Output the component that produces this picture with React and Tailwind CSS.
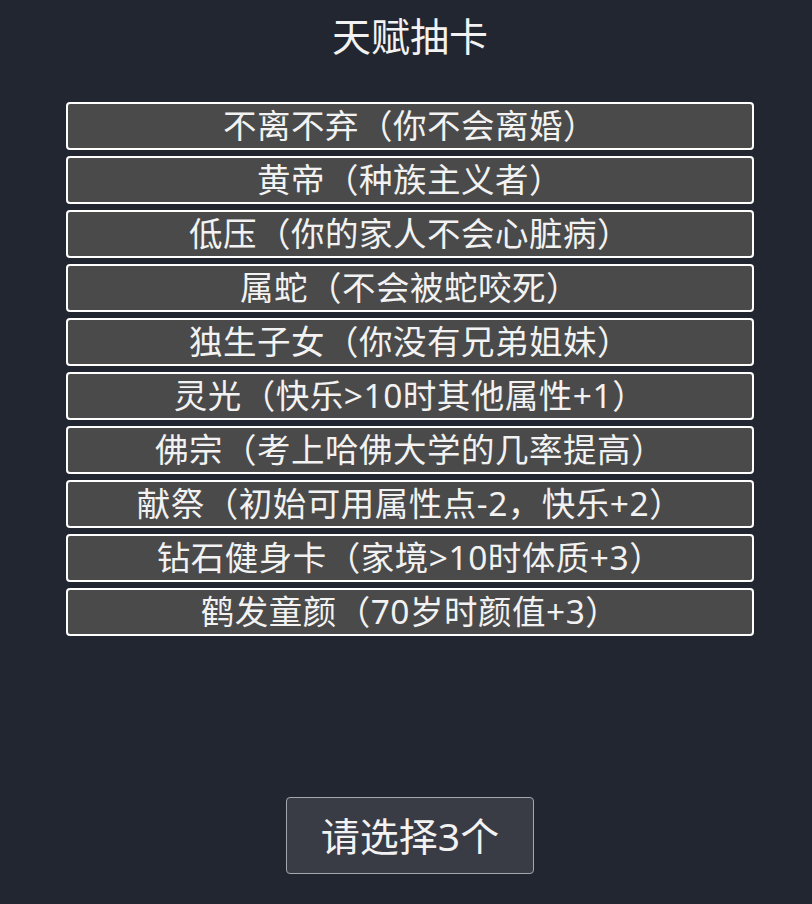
import React from "react";

const talents = [
  "不离不弃（你不会离婚）",
  "黄帝（种族主义者）",
  "低压（你的家人不会心脏病）",
  "属蛇（不会被蛇咬死）",
  "独生子女（你没有兄弟姐妹）",
  "灵光（快乐>10时其他属性+1）",
  "佛宗（考上哈佛大学的几率提高）",
  "献祭（初始可用属性点-2，快乐+2）",
  "钻石健身卡（家境>10时体质+3）",
  "鹤发童颜（70岁时颜值+3）",
];

export default function App() {
  return (
    <div
      className="min-h-[904px] w-full bg-[#222630] text-[#f2f2f2] flex flex-col items-center pl-2"
      style={{ fontFamily: '"Noto Sans", "Noto Sans CJK SC", sans-serif' }}
    >
      <h1 className="mt-[10px] h-[52px] text-[39px] leading-[52px] font-normal">
        天赋抽卡
      </h1>

      <ul className="mt-[40px] w-[688px] flex flex-col gap-[6px]">
        {talents.map((t) => (
          <li
            key={t}
            className="h-[48px] rounded-[4px] border-2 border-white bg-[#4a4a4a] flex items-center justify-center text-[33.5px] leading-none tracking-[0.5px]"
          >
            {t}
          </li>
        ))}
      </ul>

      <button className="mt-[161px] w-[248px] h-[77px] rounded-[4px] border-[1.5px] border-[#a3a7ae] bg-[#393b45] text-[39px] text-[#f2f2f2] leading-none">
        请选择3个
      </button>
    </div>
  );
}
